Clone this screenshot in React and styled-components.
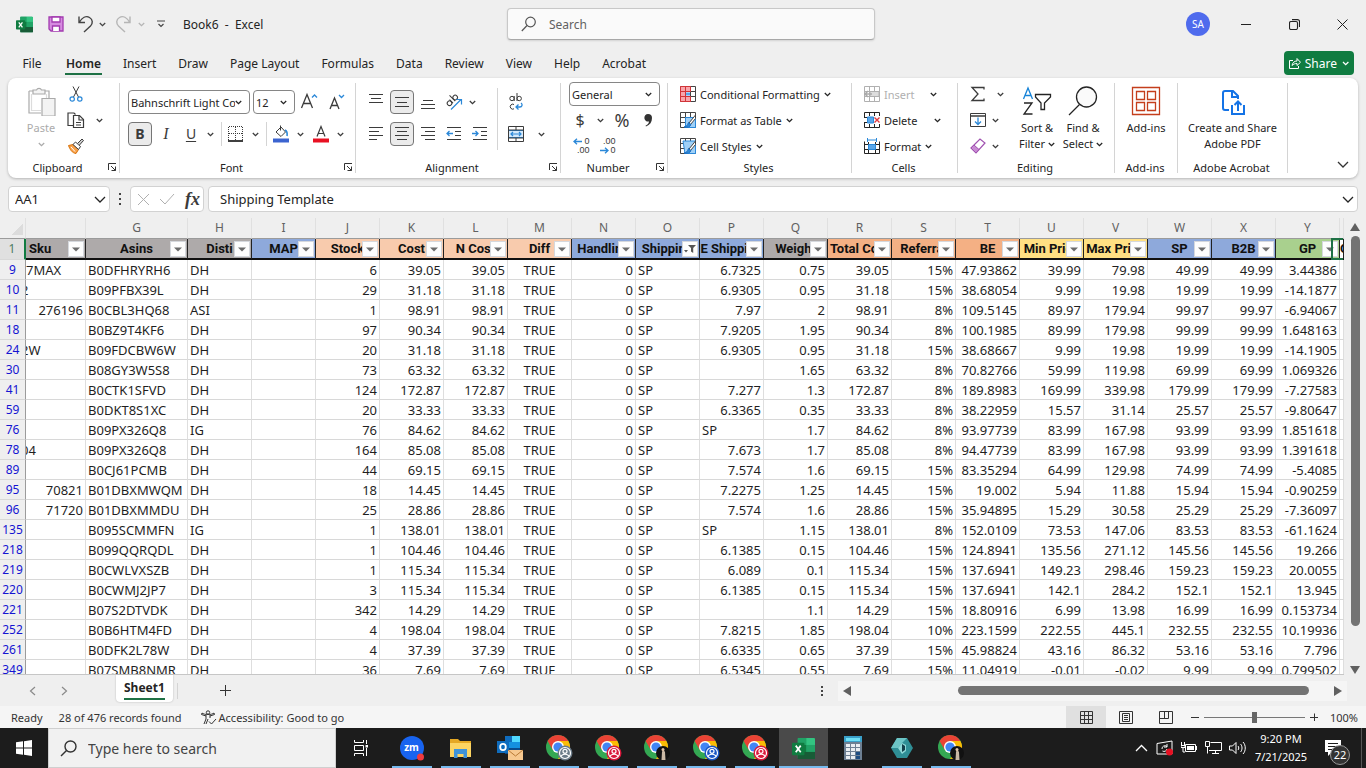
import React from "react";
import styled, { createGlobalStyle, css } from "styled-components";

const Global = createGlobalStyle`
  *, *::before, *::after { box-sizing: border-box; }
  body { margin: 0; background: #efefef; }
  body, button, input, select, textarea { font-family: "Noto Sans", "Open Sans", sans-serif; }
  button { border: 0; background: none; padding: 0; color: inherit; cursor: pointer; }
  input, select { border: 0; margin: 0; outline: 0; color: inherit; background: none; }
`;

/* ---------- shared pieces ---------- */

const Window = styled.div`
  display: flex;
  flex-direction: column;
  height: 100vh;
  overflow: hidden;
  color: #242424;
  font-size: 11px;
`;

const Svg = styled.svg`
  display: block;
  flex: none;
`;

const Icon = ({ w = 16, h = w, children, ...rest }) => (
  <Svg width={w} height={h} viewBox={`0 0 ${w} ${h}`} fill="none" stroke="currentColor" aria-hidden="true" {...rest}>
    {children}
  </Svg>
);

const Chevron = () => (
  <Icon w={7} h={5} strokeWidth="1.3"><path d="M.8 1l2.7 2.6L6.2 1" /></Icon>
);
const BigChevron = () => (
  <Icon w={12} h={7} strokeWidth="1.3"><path d="M1 1l5 5 5-5" /></Icon>
);

const Spacer = styled.i`
  flex: none;
  width: ${(p) => p.$w}px;
`;

const Filler = styled.i`
  flex: 1;
`;

/* ---------- title bar ---------- */

const TitleBar = styled.header`
  display: grid;
  grid-template-columns: 507fr 368fr 491fr;
  align-items: center;
  height: 48px;
  flex: none;
`;

const QuickAccess = styled.div`
  display: flex;
  align-items: center;
  padding-left: 16px;
  font-size: 12px;
`;

const QuickButton = styled.button`
  display: flex;
  align-items: center;
  justify-content: center;
  width: ${(p) => p.$w || 24}px;
  height: 24px;
  color: ${(p) => (p.$dim ? "#b5b5b5" : "#444")};
`;

const DocTitle = styled.span`
  margin-left: 8px;
  white-space: pre;
`;

const SearchBox = styled.label`
  display: flex;
  align-items: center;
  gap: 12px;
  height: 32px;
  padding: 0 13px;
  border: 1px solid #c8c8c8;
  border-bottom-color: #a8a8a8;
  border-radius: 4px;
  background: #fafafa;
  color: #555;
  box-shadow: 0 1px 2px rgba(0, 0, 0, 0.12);
  input { flex: 1; min-width: 0; font-size: 12px; padding: 0; }
  input::placeholder { color: #616161; opacity: 1; }
`;

const WindowControls = styled.div`
  display: flex;
  align-items: center;
  justify-content: flex-end;
`;

const Avatar = styled.button`
  width: 24px;
  height: 24px;
  margin-right: 12px;
  border-radius: 50%;
  background: #4f6bed;
  color: #fff;
  font-size: 10px;
`;

const WindowButton = styled.button`
  display: grid;
  place-items: center;
  width: 48px;
  height: 32px;
  color: #222;
`;

/* ---------- ribbon tabs ---------- */

const TabStrip = styled.nav`
  display: flex;
  align-items: stretch;
  height: 30px;
  flex: none;
  padding: 0 12px 0 9px;
`;

const RibbonTab = styled.button`
  min-width: 46px;
  padding: 0 10px;
  font-size: 12px;
  span {
    display: inline-block;
    height: 24px;
    line-height: 26px;
    padding: 0 1px;
    ${(p) => p.$active && css`
      font-weight: 600;
      border-bottom: 2px solid #1e7145;
    `}
  }
`;

const ShareButton = styled.button`
  display: flex;
  align-items: center;
  gap: 4px;
  height: 24px;
  margin: 3px 0 0 auto;
  padding: 0 4px;
  border-radius: 4px;
  background: #107c41;
  color: #fff;
  font-size: 12px;
`;

/* ---------- ribbon ---------- */

const Ribbon = styled.section`
  display: flex;
  flex: none;
  height: 100px;
  margin: 0 8px 8px;
  border-radius: 8px;
  background: #fff;
  box-shadow: 0 1px 3px rgba(0, 0, 0, 0.25);
`;

const CollapseButton = styled.button`
  display: grid;
  place-items: center;
  align-self: flex-end;
  width: 30px;
  height: 28px;
  margin-left: auto;
  color: #333;
`;

const GroupBox = styled.div`
  display: flex;
  flex-direction: column;
  flex: none;
  width: ${(p) => p.$w}px;
  padding-top: 3px;
  background: linear-gradient(#d4d4d4, #d4d4d4) right 0 top 5px / 1px 90px no-repeat;
`;

const GroupBody = styled.div`
  display: flex;
  height: 78px;
  padding-left: ${(p) => p.$pad || 0}px;
`;

const GroupFooter = styled.div`
  display: flex;
  align-items: center;
  height: 16px;
  padding-right: 3px;
  span { flex: 1; text-align: center; }
`;

const Launcher = styled.button`
  width: 10px;
  height: 10px;
  color: #333;
`;

const Group = ({ w, pad, label, launcher, children }) => (
  <GroupBox $w={w}>
    <GroupBody $pad={pad}>{children}</GroupBody>
    <GroupFooter>
      <span>{label}</span>
      {launcher && (
        <Launcher aria-label={`${label} settings`}>
          <Icon w={10}><path d="M1.500 8V1.500H9M4 4l4.500 4.500M8.500 4.500v4h-4" /></Icon>
        </Launcher>
      )}
    </GroupFooter>
  </GroupBox>
);

const Stack = styled.div`
  display: flex;
  flex-direction: column;
  padding-top: ${(p) => (p.$two ? 9 : 0)}px;
  gap: ${(p) => (p.$two ? 8 : 0)}px;
  width: ${(p) => (p.$w ? `${p.$w}px` : "auto")};
`;

const Row = styled.div`
  display: flex;
  align-items: center;
  gap: ${(p) => p.$gap || 0}px;
  height: ${(p) => p.$h || 26}px;
`;

const Tool = styled.button`
  display: grid;
  place-items: center;
  flex: none;
  width: ${(p) => p.$w || 24}px;
  height: 24px;
  color: ${(p) => (p.$dim ? "#b0b0b0" : "#3b3b3b")};
  ${(p) => p.$on && css`
    border: 1px solid #767676;
    border-radius: 4px;
    background: #ebebeb;
  `}
`;

const Glyph = styled.span`
  font-size: ${(p) => p.$size || 14}px;
  line-height: 20px;
  font-weight: ${(p) => (p.$bold ? 700 : 400)};
  font-style: ${(p) => (p.$italic ? "italic" : "normal")};
  font-family: ${(p) => (p.$serif ? '"Liberation Serif", serif' : "inherit")};
  text-decoration: ${(p) => (p.$under ? "underline" : "none")};
  text-underline-offset: 2px;
`;

const Divider = styled.i`
  width: 1px;
  height: ${(p) => p.$h || 24}px;
  margin: ${(p) => p.$m || "0 3px"};
  background: #d4d4d4;
`;

const Picker = styled.label`
  display: grid;
  grid-template-columns: 1fr 14px;
  align-items: center;
  flex: none;
  width: ${(p) => p.$w}px;
  height: 24px;
  padding-left: 2px;
  border: 1px solid #868686;
  border-radius: 4px;
  select {
    appearance: none;
    width: 100%;
    min-width: 0;
    padding: 0;
    font-size: 11px;
    overflow: hidden;
  }
`;

const Select = ({ w, label, value }) => (
  <Picker $w={w}>
    <select aria-label={label} defaultValue={value}><option>{value}</option></select>
    <Chevron />
  </Picker>
);

const BigTool = styled.button`
  display: flex;
  flex-direction: column;
  align-items: center;
  width: ${(p) => p.$w}px;
  padding-top: 5px;
  color: ${(p) => (p.$dim ? "#ababab" : "#242424")};
  font-size: 11px;
  line-height: 16px;
  > svg { margin-bottom: 4px; }
`;

const Line = styled.span`
  display: flex;
  align-items: center;
  gap: 3px;
  height: 16px;
  white-space: nowrap;
`;

const TextTool = styled.button`
  display: flex;
  align-items: center;
  gap: 4px;
  height: 26px;
  font-size: 11px;
  white-space: nowrap;
  color: ${(p) => (p.$dim ? "#b0b0b0" : "#242424")};
`;

const CommandRow = styled.div`
  display: flex;
  justify-content: space-between;
  align-items: center;
  width: ${(p) => p.$w}px;
`;

/* ---------- ribbon icons ---------- */

const PasteIcon = () => (
  <Icon w={30} stroke="#aaa" strokeWidth="1.2">
    <path d="M3 5h20v9M3 5v22h12" fill="none" /><path d="M5.500 8v16.500H15M20.500 8v6" stroke="#dcdcdc" />
    <path d="M7 8V4h3.500a2.700 2.700 0 015 0H19v4z" fill="#f3f3f3" /><path d="M16 12.500h13V30H16z" fill="#f3f3f3" />
  </Icon>
);
const CutIcon = () => (
  <Icon><path d="M5 .5l5.500 10.500M11 .5L5.500 11" /><g stroke="#2b88d8" strokeWidth="1.200"><circle cx="4.200" cy="13" r="2.200" /><circle cx="11.800" cy="13" r="2.200" /></g></Icon>
);
const CopyIcon = () => (
  <Icon w={18} h={16} strokeWidth="1.2"><path d="M6 13.500H1V1h6l1.500 1.500" /><path d="M6.500 3.500h6l4 4V15.500h-10z" fill="#fff" /><path d="M12 3.500v4.500h4.500M9 10.500h5M9 13h5" /></Icon>
);
const PainterIcon = () => (
  <Icon w={16}>
    <path d="M.5 7.500L5 6.500l5.500 5L8 15.500C4 15 2 11.500.5 7.500z" fill="#f7a14b" stroke="#d9730b" /><path d="M3 9l4 4.500" stroke="#fff" />
    <path d="M5 6.500L7.500 4l5 4.500-2 3z" fill="#fff" /><path d="M9.500 5.500L14 1l1.500 1.500L11.500 7" fill="#ccc" />
  </Icon>
);
const GrowFont = ({ down }) => (
  <Icon w={20}>
    <path d={down ? "M3 17L7.500 6 12 17M4.500 13.500h6" : "M1.500 16L7 2.500 12.500 16M3.500 11.500h7"} strokeWidth="1.3" />
    <path d={down ? "M12 3l2.500 2.500L17 3" : "M12 5.500L14.500 3 17 5.500"} stroke="#2b88d8" strokeWidth="1.3" />
  </Icon>
);
const BordersIcon = () => (
  <Icon w={16}><path d="M1 .5h14M1 7.500h14M.5 1v13M7.500 1v13M14.500 1v13" strokeDasharray="1 1" /><path d="M0 15h15" stroke="#111" strokeWidth="1.6" /></Icon>
);
const FillIcon = () => (
  <Icon w={16} h={18}><path d="M3 7l5-5 4.500 5L8 11.500z" /><path d="M7.500 .5v5" /><path d="M12 5c2 1 2.500 3 2 6" stroke="#2b88d8" strokeWidth="1.600" /><path d="M0 15.500h16" stroke="#3c64d0" strokeWidth="4" /></Icon>
);
const FontColorIcon = () => (
  <Icon w={16} h={18}><path d="M4 11.500L8 1.500l4 10M5.500 8.500h5" strokeWidth="1.2" /><path d="M0 15.500h16" stroke="#e81123" strokeWidth="4" /></Icon>
);
const Lines = ({ rows }) => (
  <Icon w={16}>{rows.map(([x, y, w]) => <path key={y} d={`M${x} ${y}h${w}`} />)}</Icon>
);
const TOP = [[1, 0.5, 14], [3, 4.5, 10], [1, 8.5, 14]];
const MID = [[1, 3.5, 14], [3, 8.5, 10], [1, 12.5, 14]];
const BOT = [[3, 6.5, 10], [1, 10.5, 14], [1, 14.5, 14]];
const LEFT = [[1, 1.5, 14], [1, 5.5, 10], [1, 9.5, 14], [1, 13.5, 8]];
const CENTER = [[1, 1.5, 14], [3, 5.5, 10], [1, 9.5, 14], [3, 13.5, 10]];
const RIGHT = [[1, 1.5, 14], [5, 5.5, 10], [1, 9.5, 14], [5, 13.5, 10]];
const OrientIcon = () => (
  <Icon w={18}>
    <g transform="rotate(-45 7 7)"><circle cx="3" cy="7.500" r="2.300" /><path d="M5.500 5v5M8.500 2v8" /><circle cx="11" cy="7.500" r="2.300" /></g>
    <path d="M6 16.500L16 6.500M11.500 6.500h5v5" stroke="#2b88d8" strokeWidth="1.2" />
  </Icon>
);
const IndentIcon = ({ inc }) => (
  <Icon w={16}><path d="M1 1.500h14M9 5.500h6M9 9.500h6M1 13.500h14" /><path d={inc ? "M0 7.500h6M3.500 5L6 7.500 3.500 10" : "M1 7.500h6M3.500 5L1 7.500 3.500 10"} stroke="#2b88d8" strokeWidth="1.3" /></Icon>
);
const WrapIcon = () => (
  <Icon w={16} h={18}>
    <circle cx="4" cy="5.500" r="2.200" /><path d="M6.200 3v5M9 0v8" /><circle cx="11.200" cy="5.500" r="2.200" />
    <path d="M6 11.500a2.500 2.500 0 100 4.300" /><path d="M13 10c2 1.500 1 4-1 4H8M10.500 11.500L8 14l2.500 2.500" stroke="#2b88d8" strokeWidth="1.300" />
  </Icon>
);
const MergeIcon = () => (
  <Icon w={16}><path d="M.5 4.500h15v7H.5z" fill="#d4e9fb" stroke="#2b88d8" /><path d="M.5.5h15v15H.5zM.5 4h15M.5 12h15M8 .5V4M8 12v3.500" /><path d="M3 8h10M5 6L3 8l2 2M11 6l2 2-2 2" stroke="#2b88d8" strokeWidth="1.200" /></Icon>
);
const CommaIcon = () => (
  <Icon w={10} h={14} stroke="none" fill="#333"><path d="M5 1a4 4 0 014 4c0 4-2 7-6 8.500l-.5-.8C5 11.500 6 10 6 8.500A3.800 3.800 0 115 1z" /></Icon>
);

const Decimal = styled.span`
  display: grid;
  grid-template-columns: auto auto;
  align-items: center;
  justify-content: end;
  width: 17px;
  font-family: "Liberation Sans", sans-serif;
  font-size: 9px;
  line-height: 9px;
  b { grid-column: 1 / 3; text-align: right; font-weight: 400; }
`;
const Arrow = ({ left }) => (
  <Icon w={11} h={7} stroke="#2b88d8" strokeWidth="1.3"><path d={left ? "M1 3.500h8M4 .8L1 3.500l3 2.700" : "M1 3.500h8M6 .8l3 2.700L6 6.200"} /></Icon>
);

const GridMark = ({ children, color = "#444" }) => (
  <Icon w={16} stroke={color}><path d="M.5 .5h15v15H.5zM.5 5.500h15M.5 10.500h15M5.500 .5v15M10.500 .5v15" />{children}</Icon>
);
const CondIcon = () => (
  <GridMark><path d="M.5 .5h10v5h-5v5h5v5H.5z" fill="#f9a5ab" stroke="#d13438" /><path d="M.5 5.500h5M.5 10.500h5M5.500 .5v15" stroke="#d13438" /><path d="M6 6.500h4v3H6z" fill="#5aa7ea" stroke="none" /></GridMark>
);
const TableIcon = ({ full }) => (
  <GridMark>
    <path d={full ? "M3 3h12.500v12.500H5z" : "M5.500 5.500h10v10h-10z"} fill="#9fd0f7" stroke="#2b88d8" />
    <path d="M15.500 3L9 11l1.500 1.500 5-6z" fill="#fff" /><path d="M8.500 10.500c-1 3-2 4-4.500 4.500 3.500.8 6 0 7-2.500z" fill="#2b88d8" stroke="#1b6ec2" />
  </GridMark>
);
const InsertIcon = () => (
  <GridMark color="#b0b0b0"><path d="M6 5.500h9v5H6z" fill="#ddd" /><path d="M0 8h8M4 5L1 8l3 3" strokeWidth="1.500" stroke="#aaa" /></GridMark>
);
const DeleteIcon = () => (
  <Icon w={16}><path d="M.5 5V.5h15V4M5.500 .5V4M10.500 .5V4M.5 11v4.500h15V12M5.500 12v3.500M10.500 12v3.500M0 5.500h4M0 10.500h4" /><path d="M3.500 5h6v6h-6z" fill="#5aa7ea" stroke="#2b88d8" /><path d="M10.500 5.500l5 5M15.500 5.500l-5 5" stroke="#e0383e" strokeWidth="1.400" /></Icon>
);
const FormatIcon = () => (
  <Icon w={16}><path d="M.5 3.500v12h15v-12M.5 6.500h15M.5 11.500h15M4.500 4v11.500M11.500 4v11.500" /><path d="M4.500 6.500h7v5h-7z" fill="#5aa7ea" stroke="#2b88d8" /><path d="M3.500 0v4M12.500 0v4M3.500 2h9" stroke="#2b88d8" /></Icon>
);
const SigmaIcon = () => <Icon w={16} strokeWidth="1.300"><path d="M14 3.500V1.500H2l6 6.500-6 6.500h12v-2" /></Icon>;
const FillDownIcon = () => (
  <Icon w={16} h={14}><path d="M.5 .5h15v13H.5z" fill="#fff" /><path d="M.5 3h15" strokeWidth="1.500" /><path d="M8 4.500V11M5 8.500L8 11.500l3-3" stroke="#2b88d8" strokeWidth="1.300" /></Icon>
);
const EraserIcon = () => (
  <Icon w={16}><path d="M1 10L10 1l5 4-9 10z" fill="#fff" stroke="#a052b0" strokeWidth="1.200" /><path d="M1 10l3-3 5 4.500L6 15z" fill="#c88ad3" stroke="#a052b0" /></Icon>
);
const SortIcon = () => (
  <Icon w={30}>
    <path d="M1.500 13L6 2l4.500 11M3 9.500h6" stroke="#1683d8" strokeWidth="1.300" /><path d="M2 17h8L2 28h8.500" strokeWidth="1.300" />
    <path d="M13.500 8.500h15v2.500l-6 6v6.500h-3.500V17L13.500 11z" fill="#fff" strokeWidth="1.300" />
  </Icon>
);
const FindIcon = () => (
  <Icon w={30} strokeWidth="1.300"><circle cx="18.500" cy="11" r="10" fill="#fafafa" /><path d="M11.500 18.500L1 29" /></Icon>
);
const AddinsIcon = () => (
  <Icon w={30} stroke="#c43e1c" strokeWidth="1.300"><path d="M1.500 1.500h27v27h-27zM5.500 5.500h8v8h-8zM16.500 5.500h8v8h-8zM5.500 16.500h8v8h-8zM16.500 16.500h8v8h-8z" /></Icon>
);
const PdfIcon = () => (
  <Icon w={26} h={30} stroke="#1473e6" strokeWidth="2"><path d="M9 24H5a2 2 0 01-2-2V7a2 2 0 012-2h8l5 5v3M12 5v6h6" /><path d="M13 20h-1v8h12v-8h-1M18 25v-9M14.500 19l3.500-3.500 3.500 3.500" /></Icon>
);

/* ---------- formula bar ---------- */

const FormulaBar = styled.div`
  display: flex;
  flex: none;
  align-items: center;
  height: 26px;
  margin: 0 8px 6px;
  font-size: 13px;
`;

const Field = styled.div`
  display: flex;
  align-items: center;
  height: 26px;
  padding: 0 3px 0 ${(p) => p.$pl || 6}px;
  border: 1px solid #d2d2d2;
  border-radius: 4px;
  background: #fff;
  width: ${(p) => (p.$w ? `${p.$w}px` : "auto")};
  flex: ${(p) => (p.$grow ? 1 : "none")};
  min-width: 0;
  input { flex: 1; min-width: 0; padding: 0; font-size: 13px; }
`;

const Dots = styled.span`
  display: grid;
  place-items: center;
  width: 20px;
`;

/* ---------- sheet ---------- */

const SheetArea = styled.main`
  display: flex;
  flex: 1;
  min-height: 0;
`;

const GridPane = styled.div`
  flex: 1;
  min-width: 0;
  overflow: hidden;
  border-bottom: 1px solid #c6c6c6;
`;

const Table = styled.table`
  width: 100%;
  table-layout: fixed;
  border-collapse: separate;
  border-spacing: 0;
  background: #fff;
  font-size: 13px;
  line-height: 18px;
  color: #1f1f1f;
  th, td { padding: 0; }
`;

const LetterCell = styled.th`
  height: 21px;
  background: #efefef;
  border-right: 1px solid #e0e0e0;
  border-bottom: 1px solid #9b9b9b;
  font-weight: 400;
  font-size: 12px;
  color: #616161;
`;

const CornerMark = styled.i`
  display: block;
  width: 11px;
  height: 11px;
  margin: 2px 0 0 12px;
  background: linear-gradient(135deg, transparent 50%, #dcdcdc 50%);
`;

const RowHead = styled.th`
  height: 20px;
  background: ${(p) => (p.$sel ? "#e0e0e0" : "#efefef")};
  border-right: ${(p) => (p.$sel ? "2px solid #107c41" : "1px solid #9b9b9b")};
  border-bottom: 1px solid #d8d8d8;
  font-weight: 400;
  font-size: 12px;
  color: ${(p) => (p.$sel ? "#4d7d63" : "#1414d2")};
`;

const HeadCell = styled.th`
  position: relative;
  height: 21px;
  background: ${(p) => p.$bg};
  border-right: 1px solid #222;
  border-bottom: 2px solid #111;
  font: bold 13px/19px Roboto, "Liberation Sans", sans-serif;
  color: #111;
  text-align: ${(p) => (p.$left ? "left" : "center")};
  > div {
    overflow: hidden;
    white-space: nowrap;
    padding-left: ${(p) => (p.$left ? 3 : 0)}px;
  }
`;

const FilterButton = styled.button`
  position: absolute;
  right: 1px;
  top: 2px;
  display: grid;
  place-items: center;
  width: 16px;
  height: 16px;
  border: 1px solid #d5d8dd;
  background: #fdfdfd;
`;

const Selection = styled.i`
  position: absolute;
  left: -9px;
  top: -1px;
  right: 0;
  bottom: -2px;
  border: 2px solid #1e7145;
  border-right: 0;
`;

const Cell = styled.td`
  height: 20px;
  overflow: hidden;
  white-space: nowrap;
  border-right: 1px solid #dedede;
  border-bottom: 1px solid #d8d8d8;
  text-align: ${(p) => p.$align};
  > div {
    height: 18px;
    padding: 0 2px;
    margin-left: ${(p) => -p.$cut}px;
  }
`;

const VScroll = styled.div`
  display: flex;
  flex-direction: column;
  align-items: center;
  gap: 5px;
  flex: none;
  width: 22px;
  padding: 5px 0 1px;
`;

const Thumb = styled.div`
  border-radius: 5px;
  background: #737373;
  ${(p) => (p.$vertical ? "width: 9px; height: 390px;" : "width: 351px; height: 9px;")}
`;

const GREY = "#aeaaaa", BLUE = "#8ea9db", PEACH = "#f8cbad", ORANGE = "#f4b084", YELLOW = "#ffe083", GREEN = "#a9d08e";
const COLUMNS = [
  ["", "Sku", GREY, "right", 59],
  ["G", "Asins", GREY, "left", 102],
  ["H", "Disti", GREY, "left", 64],
  ["I", "MAP", BLUE, "right", 64],
  ["J", "Stock", PEACH, "right", 64],
  ["K", "Cost", PEACH, "right", 64],
  ["L", "N Cost", PEACH, "right", 64],
  ["M", "Diff", PEACH, "center", 64],
  ["N", "Handling", BLUE, "right", 64],
  ["O", "Shipping", BLUE, "left", 64],
  ["P", "E Shipping", BLUE, "right", 64],
  ["Q", "Weight", GREY, "right", 64],
  ["R", "Total Cost", ORANGE, "right", 64],
  ["S", "Referral", ORANGE, "right", 64],
  ["T", "BE", ORANGE, "right", 64],
  ["U", "Min Price", YELLOW, "right", 64],
  ["V", "Max Price", YELLOW, "right", 64],
  ["W", "SP", BLUE, "right", 64],
  ["X", "B2B", BLUE, "right", 64],
  ["Y", "GP", GREEN, "right", 64],
];

const DATA = `
9|7MAX|B0DFHRYRH6|DH||6|39.05|39.05|TRUE|0|SP|6.7325|0.75|39.05|15%|47.93862|39.99|79.98|49.99|49.99|3.44386
10|2|B09PFBX39L|DH||29|31.18|31.18|TRUE|0|SP|6.9305|0.95|31.18|15%|38.68054|9.99|19.98|19.99|19.99|-14.1877
11|276196|B0CBL3HQ68|ASI||1|98.91|98.91|TRUE|0|SP|7.97|2|98.91|8%|109.5145|89.97|179.94|99.97|99.97|-6.94067
18||B0BZ9T4KF6|DH||97|90.34|90.34|TRUE|0|SP|7.9205|1.95|90.34|8%|100.1985|89.99|179.98|99.99|99.99|1.648163
24|2W|B09FDCBW6W|DH||20|31.18|31.18|TRUE|0|SP|6.9305|0.95|31.18|15%|38.68667|9.99|19.98|19.99|19.99|-14.1905
30||B08GY3W5S8|DH||73|63.32|63.32|TRUE|0|SP||1.65|63.32|8%|70.82766|59.99|119.98|69.99|69.99|1.069326
41||B0CTK1SFVD|DH||124|172.87|172.87|TRUE|0|SP|7.277|1.3|172.87|8%|189.8983|169.99|339.98|179.99|179.99|-7.27583
59||B0DKT8S1XC|DH||20|33.33|33.33|TRUE|0|SP|6.3365|0.35|33.33|8%|38.22959|15.57|31.14|25.57|25.57|-9.80647
76||B09PX326Q8|IG||76|84.62|84.62|TRUE|0|SP|SP|1.7|84.62|8%|93.97739|83.99|167.98|93.99|93.99|1.851618
78|04|B09PX326Q8|DH||164|85.08|85.08|TRUE|0|SP|7.673|1.7|85.08|8%|94.47739|83.99|167.98|93.99|93.99|1.391618
89||B0CJ61PCMB|DH||44|69.15|69.15|TRUE|0|SP|7.574|1.6|69.15|15%|83.35294|64.99|129.98|74.99|74.99|-5.4085
95|70821|B01DBXMWQM|DH||18|14.45|14.45|TRUE|0|SP|7.2275|1.25|14.45|15%|19.002|5.94|11.88|15.94|15.94|-0.90259
96|71720|B01DBXMMDU|DH||25|28.86|28.86|TRUE|0|SP|7.574|1.6|28.86|15%|35.94895|15.29|30.58|25.29|25.29|-7.36097
135||B095SCMMFN|IG||1|138.01|138.01|TRUE|0|SP|SP|1.15|138.01|8%|152.0109|73.53|147.06|83.53|83.53|-61.1624
218||B099QQRQDL|DH||1|104.46|104.46|TRUE|0|SP|6.1385|0.15|104.46|15%|124.8941|135.56|271.12|145.56|145.56|19.266
219||B0CWLVXSZB|DH||1|115.34|115.34|TRUE|0|SP|6.089|0.1|115.34|15%|137.6941|149.23|298.46|159.23|159.23|20.0055
220||B0CWMJ2JP7|DH||3|115.34|115.34|TRUE|0|SP|6.1385|0.15|115.34|15%|137.6941|142.1|284.2|152.1|152.1|13.945
221||B07S2DTVDK|DH||342|14.29|14.29|TRUE|0|SP||1.1|14.29|15%|18.80916|6.99|13.98|16.99|16.99|0.153734
252||B0B6HTM4FD|DH||4|198.04|198.04|TRUE|0|SP|7.8215|1.85|198.04|10%|223.1599|222.55|445.1|232.55|232.55|10.19936
261||B0DFK2L78W|DH||4|37.39|37.39|TRUE|0|SP|6.6335|0.65|37.39|15%|45.98824|43.16|86.32|53.16|53.16|7.796
349||B07SMB8NMR|DH||36|7.69|7.69|TRUE|0|SP|6.5345|0.55|7.69|15%|11.04919|-0.01|-0.02|9.99|9.99|0.799502
`.trim().split("\n").map((line) => line.split("|"));

/* The SKU column is partly scrolled under the row headers: how far each text runs under them. */
const SCROLLED = { "7MAX": 2, "2": 7, "2W": 7, "04": 7 };

const alignOf = (column, index, value) => {
  if (index === 0) return value in SCROLLED ? "left" : "right";
  if (value === "SP") return "left";
  return column[3];
};

/* ---------- sheet tabs and status ---------- */

const SheetTabs = styled.div`
  display: flex;
  flex: none;
  align-items: center;
  height: 31px;
  color: #8a8a8a;
`;

const TabArrow = styled.button`
  display: grid;
  place-items: center;
  width: 32px;
  height: 24px;
  color: ${(p) => (p.$dark ? "#333" : "#8a8a8a")};
`;

const SheetTab = styled.button`
  align-self: flex-start;
  height: 27px;
  margin: 0 4px 0 36px;
  padding: 0 8px;
  border-radius: 0 0 4px 4px;
  background: #fff;
  color: #242424;
  box-shadow: 0 0 2px rgba(0, 0, 0, 0.25);
  font-size: 12px;
  font-weight: 700;
  span { display: block; line-height: 20px; border-bottom: 2px solid #1e7145; }
`;

const HScroll = styled.div`
  display: flex;
  align-items: center;
  justify-content: flex-end;
  width: 509px;
  height: 20px;
  margin-right: 19px;
  padding: 0 5px;
  background: #f5f5f5;
`;

const StatusBar = styled.footer`
  display: flex;
  flex: none;
  align-items: center;
  height: 22px;
  padding: 0 8px 0 11px;
  background: #f5f5f5;
  color: #333;
`;

const StatusText = styled.span`
  display: flex;
  align-items: center;
  gap: 2px;
  margin-right: ${(p) => p.$mr || 0}px;
`;

const ViewButton = styled.button`
  display: grid;
  place-items: center;
  width: 40px;
  height: 22px;
  background: ${(p) => (p.$on ? "#e0e0e0" : "transparent")};
  color: #333;
`;

const ZoomButton = styled.button`
  display: grid;
  place-items: center;
  width: 18px;
  height: 20px;
`;

const ZoomSlider = styled.input`
  appearance: none;
  width: 101px;
  height: 11px;
  background: linear-gradient(#777, #777) center / 100% 1px no-repeat;
  &::-webkit-slider-thumb {
    appearance: none;
    width: 5px;
    height: 11px;
    background: #666;
  }
`;

const ZoomLabel = styled.span`
  width: 35px;
  text-align: right;
`;

/* ---------- taskbar ---------- */

const Taskbar = styled.nav`
  display: flex;
  flex: none;
  height: 40px;
  background: #1c1c1c;
  color: #fff;
`;

const TaskSlot = styled.button`
  display: grid;
  place-items: center;
  width: ${(p) => p.$w || 49}px;
  height: 40px;
  background: ${(p) => (p.$active ? "#4a4a4a" : "transparent")};
  background-image: ${(p) => (p.$open ? "linear-gradient(#76b9ed, #76b9ed)" : "none")};
  background-size: ${(p) => (p.$active ? "100%" : "40px")} 2px;
  background-position: center bottom;
  background-repeat: no-repeat;
`;

const TaskSearch = styled.label`
  display: flex;
  align-items: center;
  gap: 11px;
  width: 288px;
  padding-left: 11px;
  background: #f1f1f1;
  border: 1px solid #cfcfcf;
  color: #333;
  input { flex: 1; min-width: 0; padding: 0; font-size: 14px; }
  input::placeholder { color: #444; opacity: 1; }
`;

const Tray = styled.div`
  display: flex;
  align-items: center;
  margin-left: auto;
`;

const Clock = styled.div`
  width: 64px;
  text-align: center;
  line-height: 18px;
`;

const Notices = styled.button`
  position: relative;
  width: 49px;
  height: 40px;
  padding: 0 0 0 12px;
  border-right: 1px solid #555;
`;

const Badge = styled.span`
  position: absolute;
  left: 17px;
  top: 17px;
  width: 20px;
  height: 20px;
  border: 1px solid #9a9a9a;
  border-radius: 50%;
  background: #333;
  font-size: 11px;
  line-height: 18px;
  text-align: center;
`;

const ExcelLogo = ({ size = 16 }) => (
  <Svg width={size} height={size} viewBox="0 0 24 24" aria-hidden="true">
    <rect x="6" y="1" width="18" height="22" rx="1.500" fill="#21a366" />
    <path d="M6 1h9v7.300H6z" fill="#21a366" /><path d="M15 1h7.500A1.500 1.500 0 0124 2.500v5.800h-9z" fill="#33c481" />
    <path d="M6 8.300h9v7.300H6z" fill="#107c41" /><path d="M15 8.300h9v7.300h-9z" fill="#21a366" /><path d="M6 15.600h18V23H6z" fill="#185c37" />
    <rect x="0" y="6" width="13" height="13" rx="1" fill="#107c41" />
    <path d="M3.900 9l5.200 7M9.100 9l-5.200 7" stroke="#fff" strokeWidth="1.800" />
  </Svg>
);

const Chrome = ({ badge, photo }) => (
  <Svg width={28} height={28} viewBox="0 0 28 28" aria-hidden="true">
    <circle cx="13" cy="13" r="12" fill="#34a853" />
    <path d="M2.600 7A12 12 0 0123.400 7H13l-5.200 9z" fill="#ea4335" />
    <path d="M23.400 7A12 12 0 0113 25l5.200-9L13 7z" fill="#fbbc05" />
    <circle cx="13" cy="13" r="6" fill="#fff" /><circle cx="13" cy="13" r="4.600" fill="#4285f4" />
    {photo ? (
      <g><circle cx="20" cy="19" r="7" fill="#111" /><path d="M18.500 26l.5-8 1-3 2 3 .5 8z" fill="#c9b8a4" /><circle cx="20" cy="15.500" r="1.500" fill="#e2c4a8" /></g>
    ) : (
      <g><circle cx="20" cy="19" r="7.500" fill={badge} /><g fill="none" stroke="#fff" strokeWidth="1.200"><circle cx="20" cy="19" r="5.500" /><circle cx="20" cy="17.300" r="2" /><path d="M16 22.500c1-3 7-3 8 0" /></g></g>
    )}
  </Svg>
);

const ZoomLogo = () => (
  <Svg width={26} height={26} viewBox="0 0 26 26" aria-hidden="true">
    <circle cx="13" cy="13" r="12" fill="#1864f0" />
    <text x="12.500" y="16" textAnchor="middle" fontSize="10" fontWeight="700" fill="#fff">zm</text>
    <circle cx="21.500" cy="22" r="3.500" fill="#f03a3e" />
  </Svg>
);
const FolderLogo = () => (
  <Icon w={24} stroke="none"><path d="M1 3h8l2 2h11v15H1z" fill="#e5a824" /><path d="M1 7h21v14H1z" fill="#fcd462" /><path d="M5 13h13v9h-3.500v-4h-6v4H5z" fill="#3f93d8" /></Icon>
);
const OutlookLogo = () => (
  <Icon w={28} h={26} stroke="none">
    <rect x="9" y="1" width="15" height="18" fill="#1490df" /><path d="M16 1h8v6h-8z" fill="#50d9ff" /><path d="M9 1h7v6H9z" fill="#0f6cbd" /><path d="M9 13h15v6H9z" fill="#0a4a8a" />
    <rect x="1" y="6" width="12" height="12" fill="#0f6cbd" /><ellipse cx="7" cy="12" rx="2.800" ry="3.200" fill="none" stroke="#fff" strokeWidth="1.800" />
    <rect x="12" y="15" width="15" height="10" fill="#f7c88f" /><path d="M12 15l7.500 6L27 15" fill="none" stroke="#b97a36" />
  </Icon>
);
const CalcLogo = () => (
  <Icon w={20} h={24} stroke="none">
    <rect x="1" width="18" height="24" fill="#6d7f92" /><path d="M1 0h18v6H1z" fill="#3aa0c9" /><path d="M3 2h14v3H3z" fill="#6fe0f5" />
    {[8, 12, 16, 20].map((y) => [3, 8, 13].map((x) => <rect key={`${x}-${y}`} x={x} y={y} width="4" height="3" fill={x === 13 && y > 12 ? "#1d4d82" : "#e9edf1"} />))}
  </Icon>
);
const HexLogo = () => (
  <Icon w={24} stroke="none"><path d="M7 2h10l6 10-6 10H7L1 12z" fill="#2f8f96" /><path d="M7 2h10l-5 5-4 5-7 0z" fill="#6cc5c6" /><path d="M12 7l4 2v6l-4 3-4-6z" fill="#8ed9d8" /><path d="M12 8l3 2v4l-3 2z" fill="#123f4a" /></Icon>
);

const TABS = ["File", "Home", "Insert", "Draw", "Page Layout", "Formulas", "Data", "Review", "View", "Help", "Acrobat"];

export default function App() {
  return (
    <Window>
      <Global />
      <TitleBar>
        <QuickAccess>
          <ExcelLogo size={17} />
          <QuickButton aria-label="Save" $w={46}>
            <Icon w={16} stroke="#a23ab0" strokeWidth="1.300"><path d="M1 1h14v14H3l-2-2z" fill="#d58be0" /><path d="M4 1v5h8V1zM4.500 15v-5h7v5" fill="#fff" /></Icon>
          </QuickButton>
          <QuickButton aria-label="Undo" $w={14}><Icon w={16} h={18} strokeWidth="1.400"><path d="M1 1.500v6h6M1.500 7C4 3 8 .5 11.500 2.500s3.500 6 1 8.500L6 17" /></Icon></QuickButton>
          <QuickButton aria-label="Undo list" $w={18}><Chevron /></QuickButton>
          <QuickButton aria-label="Redo" $dim $w={24}><Icon w={16} h={18} strokeWidth="1.400"><path d="M15 1.500v6H9M14.500 7C12 3 8 .5 4.500 2.500S1 8.500 3.500 11l6.500 6" /></Icon></QuickButton>
          <QuickButton aria-label="Redo list" $dim $w={12}><Chevron /></QuickButton>
          <QuickButton aria-label="Customize toolbar" $w={28}><Icon w={8} h={8} strokeWidth="1.200"><path d="M0 1h8M1.500 4L4 6.500 6.500 4" /></Icon></QuickButton>
          <DocTitle>Book6  -  Excel</DocTitle>
        </QuickAccess>
        <SearchBox>
          <Icon w={16} strokeWidth="1.200"><circle cx="9.500" cy="6" r="4.800" /><path d="M6 9.500L.8 15" /></Icon>
          <input type="text" placeholder="Search" aria-label="Search" />
        </SearchBox>
        <WindowControls>
          <Avatar>SA</Avatar>
          <WindowButton aria-label="Minimize"><Icon w={10}><path d="M0 5.500h10" /></Icon></WindowButton>
          <WindowButton aria-label="Restore"><Icon w={11} strokeWidth="1.100"><rect x=".5" y="2.500" width="8" height="8" rx="1.500" /><path d="M3 .6h5.500a2 2 0 012 2V8" /></Icon></WindowButton>
          <WindowButton aria-label="Close"><Icon w={11}><path d="M.5 .5l10 10M10.500 .5l-10 10" /></Icon></WindowButton>
        </WindowControls>
      </TitleBar>

      <TabStrip>
        {TABS.map((t) => <RibbonTab key={t} $active={t === "Home"}><span>{t}</span></RibbonTab>)}
        <ShareButton>
          <Icon w={13}><path d="M5 3.500H1.500v8h9V9M4 8.500C4.500 5.500 6.500 4 9 4V1.500l3.500 3.800L9 8.500V6.500C7 6.500 5.500 7 4 8.500z" /></Icon>
          Share
          <Icon w={9} h={5} strokeWidth="1.300"><path d="M2 1l2.700 2.600L7.400 1" /></Icon>
        </ShareButton>
      </TabStrip>

      <Ribbon>
        <Group w={112} pad={9} label="Clipboard" launcher>
          <BigTool $w={48} $dim><PasteIcon /><Line>Paste</Line><Line><Chevron /></Line></BigTool>
          <Stack>
            <Row><Tool aria-label="Cut" $w={22}><CutIcon /></Tool></Row>
            <Row><Tool aria-label="Copy" $w={22}><CopyIcon /></Tool><Tool aria-label="Copy options"><Chevron /></Tool></Row>
            <Row><Tool aria-label="Format painter" $w={22}><PainterIcon /></Tool></Row>
          </Stack>
        </Group>

        <Group w={236} pad={8} label="Font" launcher>
          <Stack $two>
            <Row $h={24} $gap={3}>
              <Select w={122} label="Font name" value="Bahnschrift Light Condensed" />
              <Select w={42} label="Font size" value="12" />
              <Tool aria-label="Increase font size"><GrowFont /></Tool>
              <Tool aria-label="Decrease font size"><GrowFont down /></Tool>
            </Row>
            <Row $h={24}>
              <Tool $on aria-label="Bold"><Glyph $bold>B</Glyph></Tool>
              <Tool $w={28} aria-label="Italic"><Glyph $italic $serif $size={16}>I</Glyph></Tool>
              <Tool $w={22} aria-label="Underline"><Glyph $under>U</Glyph></Tool>
              <Tool $w={16} aria-label="Underline options"><Chevron /></Tool>
              <Divider />
              <Tool $w={22} aria-label="Borders"><BordersIcon /></Tool>
              <Tool $w={16} aria-label="Border options"><Chevron /></Tool>
              <Divider />
              <Tool $w={22} aria-label="Fill color"><FillIcon /></Tool>
              <Tool $w={16} aria-label="Fill options"><Chevron /></Tool>
              <Tool $w={26} aria-label="Font color"><FontColorIcon /></Tool>
              <Tool $w={12} aria-label="Font color options"><Chevron /></Tool>
            </Row>
          </Stack>
        </Group>

        <Group w={205} pad={8} label="Alignment" launcher>
          <Stack $two $w={128}>
            <Row $h={24} $gap={2}>
              <Tool aria-label="Top align"><Lines rows={TOP} /></Tool>
              <Tool $on aria-label="Middle align"><Lines rows={MID} /></Tool>
              <Tool aria-label="Bottom align"><Lines rows={BOT} /></Tool>
              <Tool aria-label="Orientation"><OrientIcon /></Tool>
              <Tool $w={8} aria-label="Orientation options"><Chevron /></Tool>
            </Row>
            <Row $h={24} $gap={2}>
              <Tool aria-label="Align left"><Lines rows={LEFT} /></Tool>
              <Tool $on aria-label="Center"><Lines rows={CENTER} /></Tool>
              <Tool aria-label="Align right"><Lines rows={RIGHT} /></Tool>
              <Tool aria-label="Decrease indent"><IndentIcon /></Tool>
              <Tool aria-label="Increase indent"><IndentIcon inc /></Tool>
            </Row>
          </Stack>
          <Divider $h={62} $m="7px 5px 0" />
          <Stack $two>
            <Row $h={24}><Tool $w={26} aria-label="Wrap text"><WrapIcon /></Tool></Row>
            <Row $h={24}><Tool $w={26} aria-label="Merge and center"><MergeIcon /></Tool><Tool aria-label="Merge options"><Chevron /></Tool></Row>
          </Stack>
        </Group>

        <Group w={107} pad={8} label="Number" launcher>
          <Stack>
            <Row><Select w={91} label="Number format" value="General" /></Row>
            <Row>
              <Tool $w={22} aria-label="Currency"><Glyph $size={16}>$</Glyph></Tool>
              <Tool $w={18} aria-label="Currency options"><Chevron /></Tool>
              <Tool $w={26} aria-label="Percent"><Glyph $size={18}>%</Glyph></Tool>
              <Tool $w={26} aria-label="Comma style"><CommaIcon /></Tool>
            </Row>
            <Row $gap={2}>
              <Tool aria-label="Increase decimal"><Decimal><Arrow left />0<b>.00</b></Decimal></Tool>
              <Tool aria-label="Decrease decimal"><Decimal><b>.00</b><Arrow />0</Decimal></Tool>
            </Row>
          </Stack>
        </Group>

        <Group w={184} pad={12} label="Styles">
          <Stack>
            <TextTool><CondIcon />Conditional Formatting<Chevron /></TextTool>
            <TextTool><TableIcon />Format as Table<Chevron /></TextTool>
            <TextTool><TableIcon full />Cell Styles<Chevron /></TextTool>
          </Stack>
        </Group>

        <Group w={106} pad={12} label="Cells">
          <Stack>
            <CommandRow $w={73}><TextTool $dim><InsertIcon />Insert</TextTool><Chevron /></CommandRow>
            <CommandRow $w={77}><TextTool><DeleteIcon />Delete</TextTool><Chevron /></CommandRow>
            <TextTool><FormatIcon />Format<Chevron /></TextTool>
          </Stack>
        </Group>

        <Group w={157} pad={8} label="Editing">
          <Stack $w={48}>
            <Row><Tool aria-label="AutoSum"><SigmaIcon /></Tool><Tool aria-label="AutoSum options" $w={21}><Chevron /></Tool></Row>
            <Row><Tool aria-label="Fill"><FillDownIcon /></Tool><Tool aria-label="Fill options" $w={10}><Chevron /></Tool></Row>
            <Row><Tool aria-label="Clear"><EraserIcon /></Tool><Tool aria-label="Clear options" $w={10}><Chevron /></Tool></Row>
          </Stack>
          <BigTool $w={46}><SortIcon /><Line>Sort &amp;</Line><Line>Filter <Chevron /></Line></BigTool>
          <BigTool $w={46}><FindIcon /><Line>Find &amp;</Line><Line>Select <Chevron /></Line></BigTool>
        </Group>

        <Group w={63} label="Add-ins"><BigTool $w={62}><AddinsIcon /><Line>Add-ins</Line></BigTool></Group>
        <Group w={110} label="Adobe Acrobat"><BigTool $w={109}><PdfIcon /><Line>Create and Share</Line><Line>Adobe PDF</Line></BigTool></Group>
        <CollapseButton aria-label="Collapse ribbon"><BigChevron /></CollapseButton>
      </Ribbon>

      <FormulaBar>
        <Field $w={102}>
          <input type="text" defaultValue="AA1" aria-label="Name box" />
          <BigChevron />
        </Field>
        <Dots><Icon w={4} h={14} stroke="none" fill="#444"><path d="M1 1h2v2H1zM1 6h2v2H1zM1 11h2v2H1z" /></Icon></Dots>
        <Field $w={74}>
          <Tool $dim $w={12} aria-label="Cancel"><Icon w={13}><path d="M1 1l11 11M12 1L1 12" /></Icon></Tool>
          <Tool $dim $w={36} aria-label="Enter"><Icon w={16} h={12}><path d="M1 6l5 5L15 1" /></Icon></Tool>
          <Tool $w={14} aria-label="Insert function"><Glyph $italic $serif $bold $size={18}>fx</Glyph></Tool>
        </Field>
        <Spacer $w={4} />
        <Field $grow $pl={11}>
          <input type="text" defaultValue="Shipping Template" aria-label="Formula" />
          <BigChevron />
        </Field>
      </FormulaBar>

      <SheetArea>
        <GridPane>
          <Table>
            <colgroup>
              <col width="26" />
              {COLUMNS.map((c, i) => <col key={c[1]} width={i === 0 ? 60 : c[4]} />)}
              <col />
            </colgroup>
            <thead>
              <tr>
                <LetterCell aria-label="Select all"><CornerMark /></LetterCell>
                {COLUMNS.map((c) => <LetterCell key={c[1]} scope="col">{c[0]}</LetterCell>)}
                <LetterCell />
              </tr>
              <tr>
                <RowHead $sel scope="row">1</RowHead>
                {COLUMNS.map((c, i) => (
                  <HeadCell key={c[1]} $bg={c[2]} $left={i === 0}>
                    <div>{c[1]}</div>
                    <FilterButton aria-label={`Filter ${c[1]}`}>
                      {c[0] === "O"
                        ? <Icon w={12} h={8} stroke="none" fill="#555"><path d="M4 0h8L9.200 3v5L7 6.500V3zM0 5h4L2 7.500z" /></Icon>
                        : <Icon w={8} h={5} stroke="none" fill="#6b6b6b"><path d="M0 .5h8L4 4.500z" /></Icon>}
                    </FilterButton>
                  </HeadCell>
                ))}
                <HeadCell $bg="#fff"><div>O</div><Selection /></HeadCell>
              </tr>
            </thead>
            <tbody>
              {DATA.map(([n, ...values]) => (
                <tr key={n}>
                  <RowHead scope="row">{n}</RowHead>
                  {values.map((v, i) => (
                    <Cell key={COLUMNS[i][1]} $align={alignOf(COLUMNS[i], i, v)} $cut={(i === 0 && SCROLLED[v]) || 0}>
                      <div>{v}</div>
                    </Cell>
                  ))}
                  <Cell $cut={0} />
                </tr>
              ))}
            </tbody>
          </Table>
        </GridPane>
        <VScroll>
          <Icon w={10} h={8} stroke="none" fill="#606060"><path d="M5 0l5 8H0z" /></Icon>
          <Thumb $vertical />
          <Filler />
          <Icon w={10} h={8} stroke="none" fill="#606060"><path d="M0 0h10L5 8z" /></Icon>
        </VScroll>
      </SheetArea>

      <SheetTabs>
        <Spacer $w={16} />
        <TabArrow aria-label="Previous sheet"><Icon w={7} h={10} strokeWidth="1.200"><path d="M6 1L1.500 5 6 9" /></Icon></TabArrow>
        <TabArrow aria-label="Next sheet"><Icon w={7} h={10} strokeWidth="1.200"><path d="M1 1l4.500 4L1 9" /></Icon></TabArrow>
        <SheetTab><span>Sheet1</span></SheetTab>
        <Divider $h={16} $m="0 32px 0 0" />
        <TabArrow $dark aria-label="New sheet"><Icon w={11}><path d="M5.500 0v11M0 5.500h11" /></Icon></TabArrow>
        <Filler />
        <Icon w={4} h={12} stroke="none" fill="#444"><path d="M1 1h2v2H1zM1 5h2v2H1zM1 9h2v2H1z" /></Icon>
        <Spacer $w={14} />
        <HScroll>
          <Icon w={8} h={10} stroke="none" fill="#606060"><path d="M8 0v10L0 5z" /></Icon>
          <Filler />
          <Thumb />
          <Spacer $w={25} />
          <Icon w={8} h={10} stroke="none" fill="#606060"><path d="M0 0v10l8-5z" /></Icon>
        </HScroll>
      </SheetTabs>

      <StatusBar>
        <StatusText $mr={16}>Ready</StatusText>
        <StatusText $mr={19}>28 of 476 records found</StatusText>
        <StatusText>
          <Icon w={16} h={15}><circle cx="7" cy="2.500" r="1.700" /><path d="M1 3c2 2 10 2 12 0M5 5v4l-2 5M9 5v3M1 3l-.5 1.500L5 6M13 3l.5 1.500L9 6M7 9l-2 5M8 11.500l2.500 2.500L15 9" /></Icon>
          Accessibility: Good to go
        </StatusText>
        <Filler />
        <ViewButton $on aria-label="Normal view"><Icon w={13}><path d="M.5 .5h12v12H.5zM.5 4.500h12M.5 8.500h12M4.500 .5v12M8.500 .5v12" /></Icon></ViewButton>
        <ViewButton aria-label="Page layout view"><Icon w={14} h={13}><path d="M.5 .5h13v12H.5zM3.500 2.500h7v8h-7zM5 4.500h4M5 6.500h4M5 8.500h4" /></Icon></ViewButton>
        <ViewButton aria-label="Page break view"><Icon w={14} h={13}><path d="M.5 .5h13v12H.5zM5.500 .5v7M9.500 .5v7M.5 7.500h9" /></Icon></ViewButton>
        <ZoomButton aria-label="Zoom out"><Icon w={8}><path d="M0 4.500h8" /></Icon></ZoomButton>
        <ZoomSlider type="range" min="0" max="100" defaultValue="50" aria-label="Zoom" />
        <ZoomButton aria-label="Zoom in"><Icon w={8}><path d="M0 4.500h8M4.500 .5v8" /></Icon></ZoomButton>
        <ZoomLabel>100%</ZoomLabel>
      </StatusBar>

      <Taskbar>
        <TaskSlot $w={48} aria-label="Start"><Icon w={16} stroke="none" fill="#fff"><path d="M0 2.300L7 1.300v6.200H0zM8 1.200L16 0v7.500H8zM0 8.500h7v6.200l-7-1zM8 8.500h8V16l-8-1.200z" /></Icon></TaskSlot>
        <TaskSearch>
          <Icon w={17} strokeWidth="1.400"><circle cx="10.500" cy="6.500" r="5.500" /><path d="M6.500 10.500L1 16" /></Icon>
          <input type="text" placeholder="Type here to search" aria-label="Windows search" />
        </TaskSearch>
        <TaskSlot aria-label="Task view"><Icon w={16}><path d="M1.500 0v2.500h9V0M1.500 5.500h9v5h-9zM1.500 16v-2.500h9V16M13.500 0v4M13.500 8v8" /><path d="M12.500 5h2.500v2.500h-2.500z" fill="#fff" stroke="none" /></Icon></TaskSlot>
        <Spacer $w={2} />
        <TaskSlot $open aria-label="Zoom"><ZoomLogo /></TaskSlot>
        <TaskSlot $open aria-label="File Explorer"><FolderLogo /></TaskSlot>
        <TaskSlot $open aria-label="Outlook"><OutlookLogo /></TaskSlot>
        <TaskSlot $open aria-label="Chrome"><Chrome badge="#6b7b88" /></TaskSlot>
        <TaskSlot $open aria-label="Chrome"><Chrome badge="#d9183b" /></TaskSlot>
        <TaskSlot $open aria-label="Chrome"><Chrome photo /></TaskSlot>
        <TaskSlot $open aria-label="Chrome"><Chrome badge="#1a56c4" /></TaskSlot>
        <TaskSlot $open aria-label="Chrome"><Chrome badge="#d9183b" /></TaskSlot>
        <TaskSlot $open $active aria-label="Excel"><ExcelLogo size={23} /></TaskSlot>
        <TaskSlot aria-label="Calculator"><CalcLogo /></TaskSlot>
        <TaskSlot $open aria-label="App"><HexLogo /></TaskSlot>
        <TaskSlot $open aria-label="Chrome"><Chrome photo /></TaskSlot>
        <Tray>
          <TaskSlot $w={24} aria-label="Hidden icons"><Icon w={13} h={8} strokeWidth="1.300"><path d="M1 7l5.500-5.500L12 7" /></Icon></TaskSlot>
          <TaskSlot $w={24} aria-label="Updates"><Icon w={18} h={16}><path d="M1 3.500L16 1v13H1z" /><path d="M6 9a3 3 0 015-2.500M11 4v3H8M11 9a3 3 0 01-4.500 2" /><circle cx="13.500" cy="12" r="3.500" fill="#e81123" stroke="none" /></Icon></TaskSlot>
          <TaskSlot $w={24} aria-label="Battery"><Icon w={16} h={12}><path d="M4.500 2.500h10v7h-10z" /><path d="M6 4h7v4H6zM15 4h1v4h-1z" fill="#fff" stroke="none" /><path d="M.5 0v3M3.500 0v3M0 3.500h4v2H0zM2 5v5h2" /></Icon></TaskSlot>
          <TaskSlot $w={24} aria-label="Network"><Icon w={17} h={14}><path d="M5.500 1.500h11v8H4M.5 .5h4v5h-4zM2.500 5.500v7M10.500 9.500v3M7 12.500h7" /></Icon></TaskSlot>
          <TaskSlot $w={24} aria-label="Volume"><Icon w={17} h={14}><path d="M.5 5h3L7 1.500v11L3.500 9h-3zM9 5c1 1 1 3 0 4M11.500 3c2 2 2 6 0 8M14 1c3 3 3 9 0 12" /></Icon></TaskSlot>
          <Clock>9:20 PM<br />7/21/2025</Clock>
          <Notices aria-label="Notifications">
            <Icon w={16} h={16} stroke="none" fill="#fff"><path d="M0 0h16v12H7l-4 4v-4H0z" /><path d="M3 3.500h10M3 6.500h10M3 9.500h7" stroke="#1c1c1c" /></Icon>
            <Badge>22</Badge>
          </Notices>
          <Spacer $w={4} />
        </Tray>
      </Taskbar>
    </Window>
  );
}
